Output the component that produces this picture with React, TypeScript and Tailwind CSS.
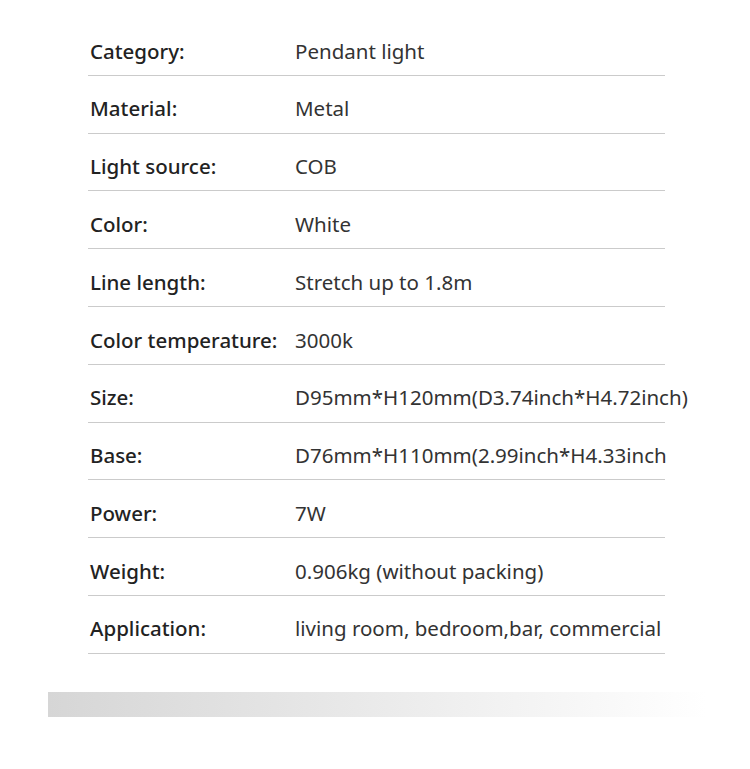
const specs = [
  { label: 'Category:', value: 'Pendant light' },
  { label: 'Material:', value: 'Metal' },
  { label: 'Light source:', value: 'COB' },
  { label: 'Color:', value: 'White' },
  { label: 'Line length:', value: 'Stretch up to 1.8m' },
  { label: 'Color temperature:', value: '3000k' },
  { label: 'Size:', value: 'D95mm*H120mm(D3.74inch*H4.72inch)' },
  { label: 'Base:', value: 'D76mm*H110mm(2.99inch*H4.33inch' },
  { label: 'Power:', value: '7W' },
  { label: 'Weight:', value: '0.906kg (without packing)' },
  { label: 'Application:', value: 'living room, bedroom,bar, commercial' },
];

const App = () => {
  return (
    <div className="w-[750px] h-[769px] bg-white font-['Noto_Sans',sans-serif] overflow-hidden">
      <div className="pt-[18px] ml-[88px] w-[577px]">
        {specs.map((row) => (
          <div
            key={row.label}
            className="flex items-center h-[57.8px] pt-[9px] border-b border-[#cbcbcb]"
          >
            <span className="w-[207px] pl-[2px] shrink-0 text-[20.5px] font-medium text-[#222]">
              {row.label}
            </span>
            <span className="text-[20.5px] text-[#333] whitespace-nowrap">{row.value}</span>
          </div>
        ))}
      </div>

      {/* fade bar */}
      <div className="mt-[38px] ml-[48px] w-[658px] h-[25px] bg-gradient-to-r from-[#d6d6d6] to-white" />
    </div>
  );
};

export default App;
